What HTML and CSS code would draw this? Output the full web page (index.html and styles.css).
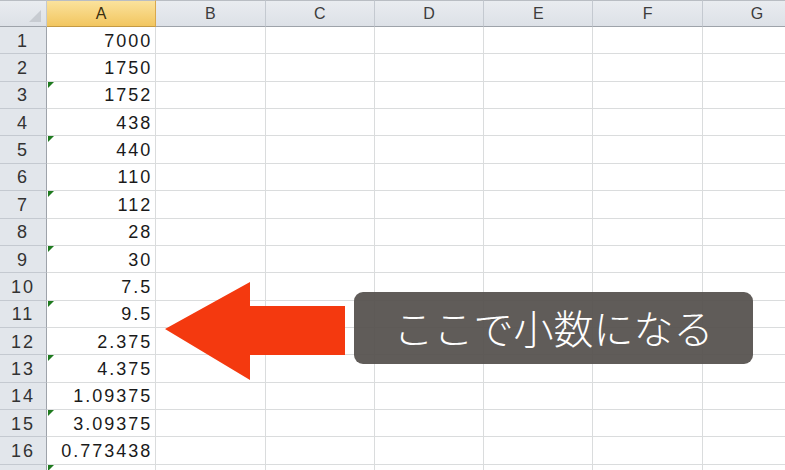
FILE: index.html
```html
<!DOCTYPE html>
<html lang="ja">
<head>
<meta charset="utf-8">
<link rel="stylesheet" href="styles.css">
</head>
<body>
<div class="sheet">
  <div class="grid">
    <div class="corner"><span class="corner-tri"></span></div>
    <div class="colhead active">A</div>
    <div class="colhead">B</div>
    <div class="colhead">C</div>
    <div class="colhead">D</div>
    <div class="colhead">E</div>
    <div class="colhead">F</div>
    <div class="colhead">G</div>
  </div>
  <div class="grid body" id="rows"></div>

  <svg class="arrow" width="200" height="110" viewBox="0 0 200 110">
    <polygon points="0,47 85,0 85,24 180,24 180,73 85,73 85,98" fill="#f4390f"/>
  </svg>
  <div class="callout">ここで小数になる</div>
</div>
<script>
  var vals = ["7000","1750","1752","438","440","110","112","28","30","7.5","9.5","2.375","4.375","1.09375","3.09375","0.773438",""];
  var html = "";
  for (var i = 0; i < vals.length; i++) {
    var n = i + 1;
    var flag = (n >= 3 && n % 2 === 1) ? " flag" : "";
    var label = n <= 16 ? n : "";
    html += '<div class="rowhead">' + label + '</div>';
    html += '<div class="cell num' + flag + '">' + vals[i] + '</div>';
    for (var c = 0; c < 6; c++) html += '<div class="cell"></div>';
  }
  document.getElementById("rows").innerHTML = html;
</script>
</body>
</html>
```

FILE: styles.css
```css
html, body {
  margin: 0;
  padding: 0;
  background: #ffffff;
}
.sheet {
  position: relative;
  width: 785px;
  height: 470px;
  overflow: hidden;
  font-family: "Liberation Sans", "Noto Sans CJK JP", sans-serif;
}
.grid {
  display: grid;
  grid-template-columns: 47px repeat(7, 109.3px);
}
.grid.body {
  grid-auto-rows: 27.36px;
}
.corner, .colhead {
  height: 27px;
  box-sizing: border-box;
  background: linear-gradient(#e9ecf0, #dde1e7);
  border-right: 1px solid #c4c9d0;
  border-bottom: 1px solid #9ea3aa;
}
.corner {
  position: relative;
  border-top: 1px solid #b9bdc3;
}
.corner-tri {
  position: absolute;
  right: 5px;
  bottom: 4px;
  width: 0;
  height: 0;
  border-left: 12px solid transparent;
  border-bottom: 12px solid #c7cbd1;
}
.colhead {
  border-top: 1px solid #b9bdc3;
  display: flex;
  align-items: center;
  justify-content: center;
  font-size: 16px;
  color: #3c3c3c;
  padding-top: 1px;
}
.colhead.active {
  background: linear-gradient(#fbe29c, #f2c660);
  border-right: 1px solid #d9a84c;
  border-bottom: 1px solid #c49a44;
  color: #3a2f10;
}
.rowhead {
  box-sizing: border-box;
  background: #e2e6eb;
  border-right: 1px solid #9ea3aa;
  border-bottom: 1px solid #c4c9d0;
  display: flex;
  align-items: center;
  justify-content: center;
  font-size: 18px;
  letter-spacing: 2px;
  color: #333;
  padding-top: 2px;
}
.cell {
  position: relative;
  box-sizing: border-box;
  border-right: 1px solid #dadcdd;
  border-bottom: 1px solid #dadcdd;
}
.cell.num {
  display: flex;
  align-items: center;
  justify-content: flex-end;
  padding-right: 3px;
  padding-top: 2px;
  font-size: 18px;
  letter-spacing: 2px;
  color: #1a1a1a;
}
.cell.flag::before {
  content: "";
  position: absolute;
  left: 1px;
  top: 0;
  width: 0;
  height: 0;
  border-top: 6px solid #1f7a1f;
  border-right: 6px solid transparent;
}
.arrow {
  position: absolute;
  left: 165px;
  top: 282px;
}
.callout {
  position: absolute;
  left: 354px;
  top: 292px;
  width: 399px;
  height: 72px;
  box-sizing: border-box;
  border-radius: 9px;
  background: rgba(84, 80, 76, 0.93);
  color: #ffffff;
  display: flex;
  align-items: center;
  justify-content: center;
  font-family: "Noto Sans CJK JP", sans-serif;
  font-weight: 300;
  font-size: 40px;
  padding-bottom: 2px;
}
```
